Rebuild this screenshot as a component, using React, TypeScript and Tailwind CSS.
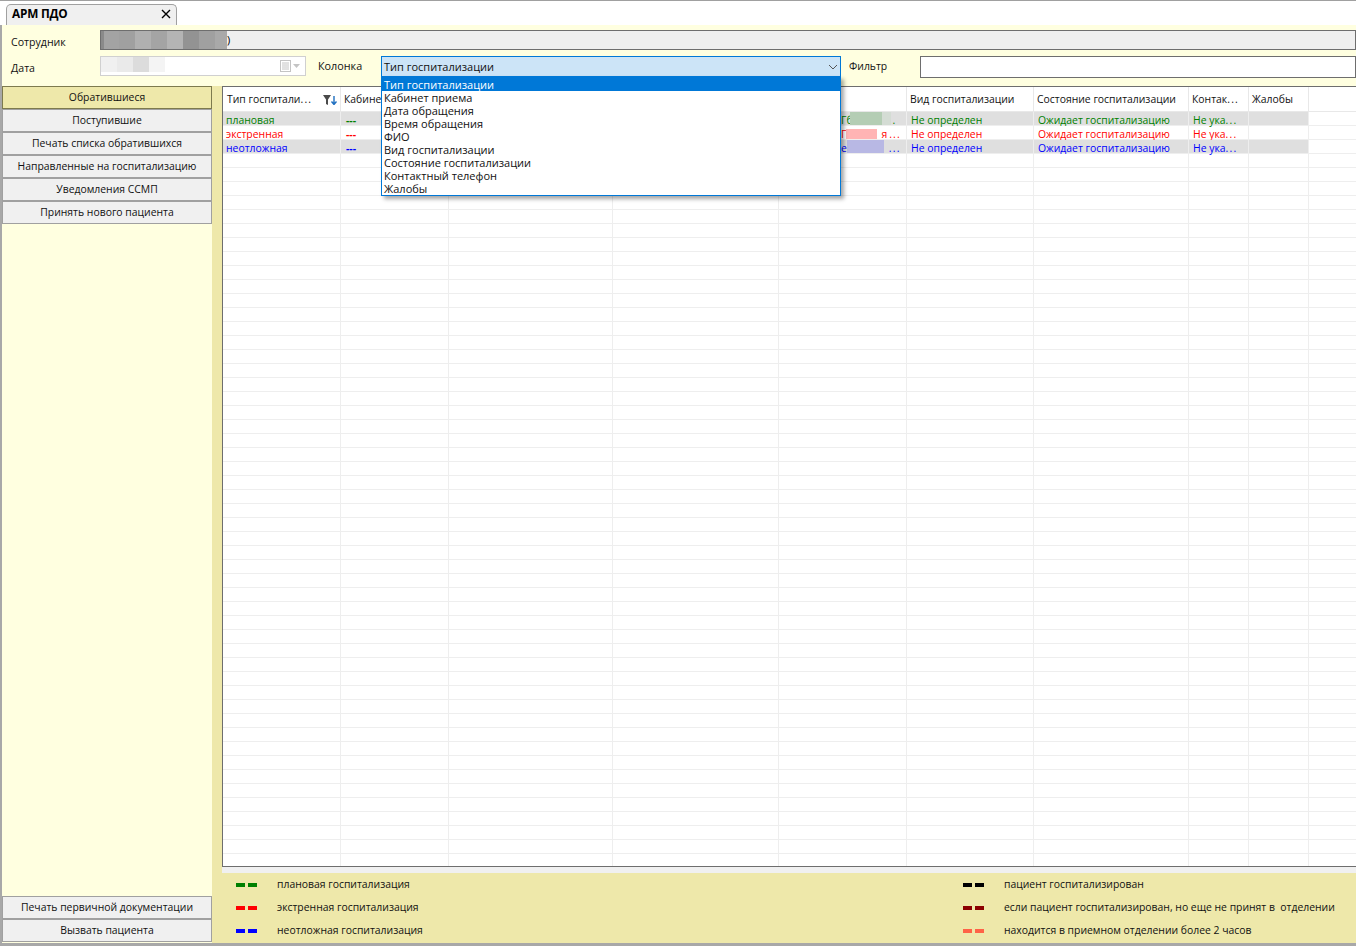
import React from 'react';

const COLS = [118, 108, 164, 166, 128, 127, 155, 60, 60, 48];

const FONT = "font-['Open_Sans','Liberation_Sans',sans-serif]";

interface RowData {
  color: string;
  shaded: boolean;
  cells: string[];
  fio: React.ReactNode;
}

const Dots = () => <span className="tracking-[1.2px]">...</span>;

const rows: RowData[] = [
  {
    color: 'text-[#008000]',
    shaded: true,
    cells: ['плановая', '---', '', '', '', 'Не определен', 'Ожидает госпитализацию', 'Не ука…', ''],
    fio: (
      <>
        <span className="ml-[62px]">Гб</span>
        <span className="-ml-[3px] w-[32px] h-[13px] bg-[#b4cdb4]" />
        <span className="w-[9px] h-[13px] bg-[#d4dcd4]" />
        <span className="ml-[2px]">.</span>
      </>
    ),
  },
  {
    color: 'text-[#ff0000]',
    shaded: false,
    cells: ['экстренная', '---', '', '', '', 'Не определен', 'Ожидает госпитализацию', 'Не ука…', ''],
    fio: (
      <>
        <span className="ml-[62px]">Г</span>
        <span className="w-[31px] h-[10px] mt-[3px] bg-[#ffb4b4]" />
        <span className="ml-[4px]">я</span>
        <span className="ml-[2px]">
          <Dots />
        </span>
      </>
    ),
  },
  {
    color: 'text-[#0000ff]',
    shaded: true,
    cells: ['неотложная', '---', '', '', '', 'Не определен', 'Ожидает госпитализацию', 'Не ука…', ''],
    fio: (
      <>
        <span className="ml-[62px]">е</span>
        <span className="w-[37px] h-[13px] bg-[#b8b8e4]" />
        <span className="ml-[5px]">
          <Dots />
        </span>
      </>
    ),
  },
];

const headers = ['Тип госпитали…', 'Кабинет приема', 'Дата обращения', 'Время обращения', 'ФИО', 'Вид госпитализации', 'Состояние госпитализации', 'Контак…', 'Жалобы'];

const options = ['Тип госпитализации', 'Кабинет приема', 'Дата обращения', 'Время обращения', 'ФИО', 'Вид госпитализации', 'Состояние госпитализации', 'Контактный телефон', 'Жалобы'];

const legendLeft = [
  { c: 'bg-[#008000]', t: 'плановая госпитализация' },
  { c: 'bg-[#ff0000]', t: 'экстренная госпитализация' },
  { c: 'bg-[#0000ff]', t: 'неотложная госпитализация' },
];
const legendRight = [
  { c: 'bg-black', t: 'пациент госпитализирован' },
  { c: 'bg-[#8b0000]', t: 'если пациент госпитализирован, но еще не принят в  отделении' },
  { c: 'bg-[#ff6347]', t: 'находится в приемном отделении более 2 часов' },
];

// the grid trims long values with widely spaced dots
function clipped(text: string) {
  if (!text.endsWith('…')) return text;
  return (
    <>
      {text.slice(0, -1)}
      <Dots />
    </>
  );
}

function SideButton({ label, active }: { label: string; active?: boolean }) {
  return (
    <div
      className={
        active
          ? 'h-[23px] flex items-center justify-center border border-[#7d7a4e] bg-[#eee8aa] text-[10.4px] text-[#111]'
          : 'h-[23px] flex items-center justify-center border border-[#a0a0a0] bg-[#f0f0f0] text-[10.4px] text-[#111]'
      }
    >
      {label}
    </div>
  );
}

function Legend({ items, left }: { items: { c: string; t: string }[]; left: string }) {
  return (
    <div className={`${left} flex flex-col gap-[9px] pt-[5px]`}>
      {items.map((it) => (
        <div key={it.t} className="h-[14px] flex items-center text-[10.4px] text-[#111]">
          <span className={`w-[9px] h-[4px] ${it.c}`} />
          <span className={`w-[9px] h-[4px] ml-[3px] ${it.c}`} />
          <span className="ml-[20px] whitespace-pre">{it.t}</span>
        </div>
      ))}
    </div>
  );
}

export default function App() {
  return (
    <div className={`${FONT} relative w-[1356px] h-[946px] overflow-hidden bg-white text-[#111] text-[11px]`}>
      {/* tab strip */}
      <div className="h-[25px] flex items-end pl-[6px] border-t border-[#a0a0a0] bg-white">
        <div className="w-[171px] h-[21px] flex items-center justify-between pl-[5px] pr-[5px] pb-[2px] border border-b-0 border-[#a0a0a0] rounded-t-[5px] bg-[#f0f0f0]">
          <span className="text-[11.8px] font-bold text-black tracking-[-0.2px]">АРМ ПДО</span>
          <svg width="10" height="10" viewBox="0 0 10 10">
            <path d="M1 1 L9 9 M9 1 L1 9" stroke="#000" strokeWidth="1.4" />
          </svg>
        </div>
      </div>

      <div className="h-[918px] flex border-l-2 border-[#a8a8a8] bg-[#ffffe0]">
        <div className="w-full flex flex-col">
          {/* filter bar */}
          <div className="h-[61px] shrink-0 flex flex-col">
            <div className="h-[26px] pt-[5px] flex items-start">
              <span className="w-[98px] pl-[9px] pt-[5px] text-[10.6px]">Сотрудник</span>
              <div className="flex-1 h-[20px] flex items-start border border-[#6e6e6e] bg-[#efefef]">
                <div className="w-[3px] h-[18px] bg-[#8a8a8a]" />
                <div className="h-[18px] w-[123px] flex">
                  <span className="w-[15px] bg-[#a3a3a3]" />
                  <span className="w-[16px] bg-[#a0a0a0]" />
                  <span className="w-[16px] bg-[#b0b0b0]" />
                  <span className="w-[16px] bg-[#a4a4a4]" />
                  <span className="w-[16px] bg-[#b4b4b4]" />
                  <span className="w-[16px] bg-[#939393]" />
                  <span className="w-[16px] bg-[#a0a0a0]" />
                  <span className="w-[12px] bg-[#a9a9a9]" />
                </div>
                <span className="text-[11px] leading-[17px] text-black">)</span>
              </div>
            </div>
            <div className="h-[35px] pt-[5px] flex items-start">
              <span className="w-[98px] pl-[9px] pt-[5px] text-[10.6px]">Дата</span>
              <div className="w-[206px] h-[20px] relative border border-[#d0d0d0] bg-white">
                <div className="absolute left-0 top-0 h-[15px] w-[65px] flex">
                  <span className="w-[16px] bg-[#f0f0f0]" />
                  <span className="w-[16px] bg-[#eaeaea]" />
                  <span className="w-[16px] bg-[#dcdcdc]" />
                  <span className="w-[16px] bg-[#f4f4f4]" />
                </div>
                <div className="absolute right-[5px] top-[3px] flex items-center gap-[2px]">
                  <svg width="11" height="12" viewBox="0 0 11 12">
                    <rect x="0.5" y="0.5" width="10" height="11" fill="#fff" stroke="#c4c4c4" />
                    <path d="M2 3 H9 M2 5 H9 M2 7 H9 M2 9 H9" stroke="#c4c4c4" />
                  </svg>
                  <svg width="7" height="4" viewBox="0 0 7 4">
                    <path d="M0 0 H7 L3.5 4 Z" fill="#c4c4c4" />
                  </svg>
                </div>
              </div>
              <span className="w-[75px] pl-[12px] pt-[2px] text-[10.8px]">Колонка</span>
              <div className="w-[460px] h-[21px] pt-[1px] border border-[#0078d7] bg-[#cce4f7] flex items-center justify-between pl-[2px] pr-[2px] text-[11px]">
                <span>Тип госпитализации</span>
                <svg width="10" height="6" viewBox="0 0 10 6">
                  <path d="M1 1 L5 5 L9 1" fill="none" stroke="#555" strokeWidth="1" />
                </svg>
              </div>
              <span className="w-[79px] pl-[8px] pt-[3px] text-[10.4px]">Фильтр</span>
              <div className="flex-1 h-[22px] border border-[#6e6e6e] bg-white" />
            </div>
          </div>

          {/* body */}
          <div className="flex-1 flex min-h-0">
            {/* sidebar */}
            <div className="w-[210px] shrink-0 flex flex-col justify-between pb-[1px]">
              <div className="flex flex-col">
                <SideButton label="Обратившиеся" active />
                <SideButton label="Поступившие" />
                <SideButton label="Печать списка обратившихся" />
                <SideButton label="Направленные на госпитализацию" />
                <SideButton label="Уведомления ССМП" />
                <SideButton label="Принять нового пациента" />
              </div>
              <div className="flex flex-col">
                <SideButton label="Печать первичной документации" />
                <SideButton label="Вызвать пациента" />
              </div>
            </div>
            <div className="w-[10px] shrink-0 bg-[#eee8aa]" />

            {/* grid + legend */}
            <div className="flex-1 flex flex-col min-w-0">
              <div className="h-[781px] shrink-0 border border-[#6e6e6e] border-r-0 bg-white overflow-hidden">
                <div className="h-[25px] flex border-b border-[#e8e8e8]">
                  {headers.map((h, i) => (
                    <div
                      key={h}
                      style={{ width: COLS[i] }}
                      className={
                        i === 0
                          ? 'shrink-0 relative pl-[4px] pt-[2px] flex items-center border-r border-[#e8e8e8] whitespace-nowrap text-[10.4px]'
                          : 'shrink-0 relative pl-[3px] pt-[2px] flex items-center border-r border-[#e8e8e8] whitespace-nowrap text-[10.4px]'
                      }
                    >
                      <span>{clipped(h)}</span>
                      {i === 0 && (
                        <svg className="absolute right-[3px] top-[8px]" width="14" height="10" viewBox="0 0 14 10">
                          <path d="M0 0 H8 L5 4.5 V10 L3 9 V4.5 Z" fill="#4a4a4a" />
                          <path d="M11 1 V9 M8.5 6.5 L11 9.5 L13.5 6.5" fill="none" stroke="#1f6fc0" strokeWidth="1.4" />
                        </svg>
                      )}
                    </div>
                  ))}
                </div>
                {Array.from({ length: 54 }).map((_, r) => {
                  const row = rows[r];
                  return (
                    <div key={r} className="h-[14px] flex border-b border-[#eeeeee]">
                      {COLS.slice(0, 9).map((w, c) => (
                        <div
                          key={c}
                          style={{ width: w }}
                          className={`shrink-0 h-[13px] border-r border-[#eeeeee] whitespace-nowrap text-[10.4px] leading-[16px] ${
                            c === 0 ? 'pl-[3px]' : c === 1 ? 'pl-[5px] font-bold' : 'pl-[4px]'
                          } ${row && row.shaded ? 'bg-[#dfdfdf]' : ''} ${row ? row.color : ''} ${
                            c === 4 ? 'flex items-start !pl-0' : ''
                          }`}
                        >
                          {row ? (c === 4 ? row.fio : clipped(row.cells[c])) : ''}
                        </div>
                      ))}
                    </div>
                  );
                })}
              </div>
              <div className="h-[6px] shrink-0 bg-[#f0f0f0]" />
              <div className="flex-1 bg-[#eee8aa] flex">
                <Legend items={legendLeft} left="w-[741px] pl-[14px]" />
                <Legend items={legendRight} left="" />
              </div>
            </div>
          </div>
        </div>
      </div>
      <div className="h-[3px] bg-[#a8a8a8]" />

      {/* open dropdown */}
      <div className="absolute left-[381px] top-[76px] w-[460px] h-[120px] border border-[#0078d7] bg-white shadow-[3px_3px_4px_rgba(0,0,0,0.35)] flex flex-col overflow-hidden">
        {options.map((o, i) => (
          <div
            key={o}
            className={
              i === 0
                ? 'h-[13px] shrink-0 leading-[13px] pt-[1px] box-content -mb-[1px] pl-[2px] text-[11px] bg-[#0078d7] text-white'
                : 'h-[13px] shrink-0 leading-[13px] pt-[1px] box-content -mb-[1px] pl-[2px] text-[11px] text-[#111]'
            }
          >
            {o}
          </div>
        ))}
      </div>
    </div>
  );
}
